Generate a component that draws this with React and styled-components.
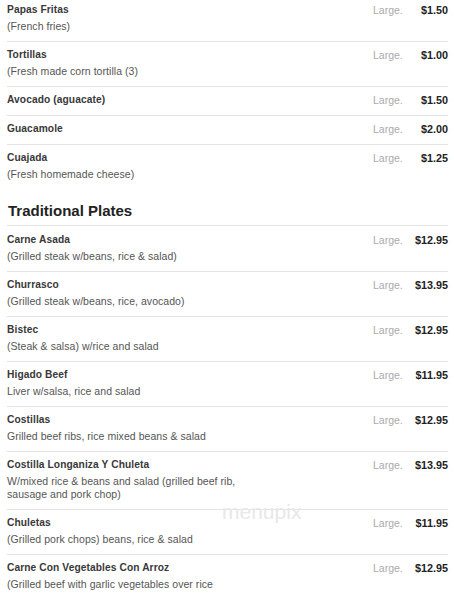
import styled, { createGlobalStyle } from 'styled-components';

const GlobalStyle = createGlobalStyle`
    html, body {
        margin: 0;
        padding: 0;
        background: #fff;
    }
    body {
        font-family: "Liberation Sans", Arial, sans-serif;
        color: #333;
    }
`;

const sides = [
    { name: 'Papas Fritas', desc: '(French fries)', price: '$1.50' },
    { name: 'Tortillas', desc: '(Fresh made corn tortilla (3)', price: '$1.00' },
    { name: 'Avocado (aguacate)', price: '$1.50' },
    { name: 'Guacamole', price: '$2.00' },
    { name: 'Cuajada', desc: '(Fresh homemade cheese)', price: '$1.25' }
];

const plates = [
    { name: 'Carne Asada', desc: '(Grilled steak w/beans, rice & salad)', price: '$12.95' },
    { name: 'Churrasco', desc: '(Grilled steak w/beans, rice, avocado)', price: '$13.95' },
    { name: 'Bistec', desc: '(Steak & salsa) w/rice and salad', price: '$12.95' },
    { name: 'Higado Beef', desc: 'Liver w/salsa, rice and salad', price: '$11.95' },
    { name: 'Costillas', desc: 'Grilled beef ribs, rice mixed beans & salad', price: '$12.95' },
    {
        name: 'Costilla Longaniza Y Chuleta',
        desc: 'W/mixed rice & beans and salad (grilled beef rib, sausage and pork chop)',
        price: '$13.95'
    },
    { name: 'Chuletas', desc: '(Grilled pork chops) beans, rice & salad', price: '$11.95' },
    { name: 'Carne Con Vegetables Con Arroz', desc: '(Grilled beef with garlic vegetables over rice', price: '$12.95' }
];

const MenuItem = ({ item }) => (
    <Item>
        <Info>
            <Name>{item.name}</Name>
            {item.desc && <Desc>{item.desc}</Desc>}
        </Info>
        <Size>Large.</Size>
        <Price>{item.price}</Price>
    </Item>
);

const App = () => (
    <>
        <GlobalStyle />
        <Page>
            <Section>
                {sides.map(item => <MenuItem key={item.name} item={item} />)}
            </Section>
            <Section>
                <Heading>Traditional Plates</Heading>
                {plates.map(item => <MenuItem key={item.name} item={item} />)}
            </Section>
            <Watermark>menupix</Watermark>
        </Page>
    </>
);

const Page = styled.div`
    position: relative;
    width: 441px;
    padding: 0 6px 0 7px;
`;

const Section = styled.section`
    display: flex;
    flex-direction: column;

    & + & {
        margin-top: 12px;
    }
`;

const Heading = styled.h2`
    margin: 0;
    padding: 0 0 4px 1px;
    font-size: 15px;
    line-height: 20px;
    font-weight: bold;
    color: #222;
`;

const Item = styled.div`
    display: flex;
    align-items: flex-start;
    padding: 6px 0 8px;
    border-top: 1px solid #e4e4e4;

    &:first-child {
        border-top: none;
        padding-top: 3px;
    }

    h2 + & {
        padding-top: 7px;
    }
`;

const Info = styled.div`
    width: 250px;
    margin-right: auto;
`;

const Name = styled.div`
    font-size: 10.2px;
    line-height: 14px;
    font-weight: bold;
    color: #383838;
    letter-spacing: 0.1px;
`;

const Desc = styled.div`
    margin-top: 3px;
    font-size: 10.5px;
    line-height: 13px;
    color: #555;
    letter-spacing: 0.05px;
`;

const Size = styled.span`
    width: 34px;
    font-size: 10.5px;
    line-height: 14px;
    color: #aaa;
`;

const Price = styled.span`
    width: 41px;
    text-align: right;
    font-size: 10.8px;
    line-height: 14px;
    font-weight: bold;
    color: #222;
`;

const Watermark = styled.div`
    position: absolute;
    left: 222px;
    top: 500px;
    font-size: 21px;
    font-weight: 300;
    color: #e8e8e8;
    pointer-events: none;
`;

export default App;
